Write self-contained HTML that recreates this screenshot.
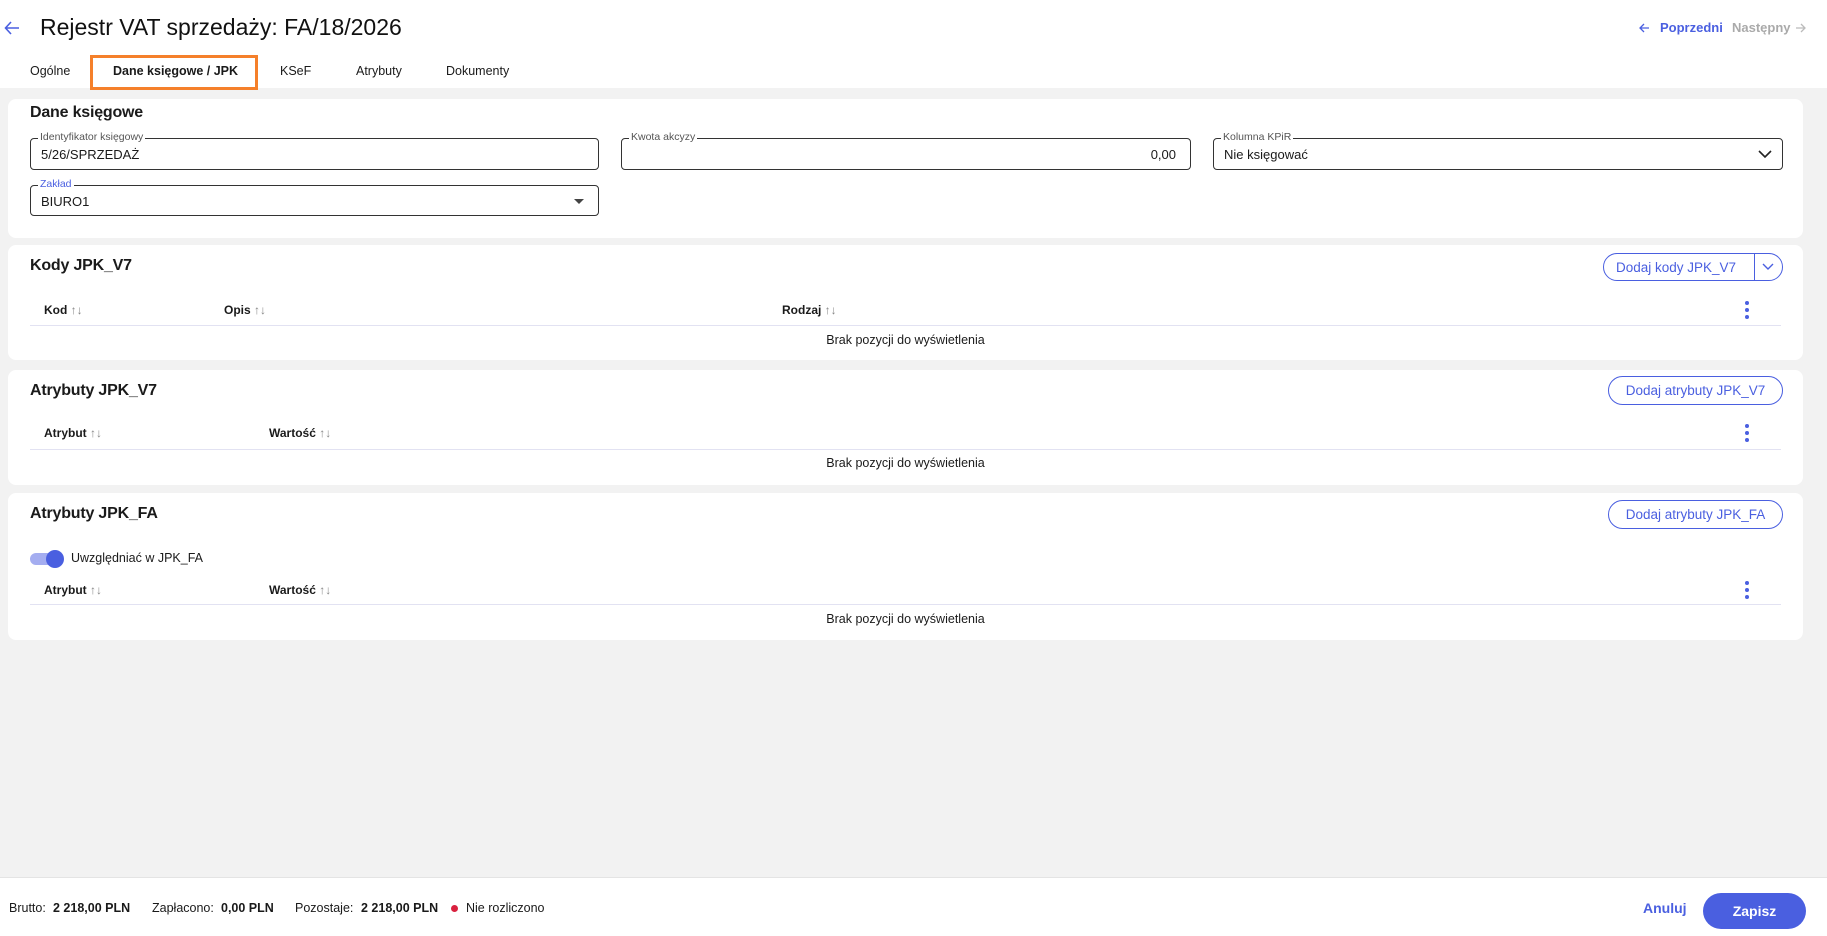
<!DOCTYPE html>
<html><head><meta charset="utf-8"><style>
*{box-sizing:border-box;margin:0;padding:0}
body{width:1827px;height:936px;background:#f2f2f2;font-family:"Liberation Sans",sans-serif;color:#1a1a1a;position:relative;overflow:hidden;font-size:13px}
.abs{position:absolute}
.top{position:absolute;left:0;top:0;width:1827px;height:88px;background:#fff}
.tabbar{position:absolute;left:0;top:55px;width:530px;height:33px;background:#fff}
.card{position:absolute;left:8px;width:1795px;background:#fff;border-radius:8px}
.h{position:absolute;left:22px;font-size:16px;font-weight:bold;letter-spacing:-0.2px}
.fld{position:absolute;border:1px solid #333;border-radius:4px;height:32px}
.fld .lab{position:absolute;top:-8px;left:7px;background:#fff;padding:0 2px;font-size:10.5px;color:#555;line-height:13px}
.fld .val{position:absolute;top:8px;left:10px;font-size:13px}
.btn{position:absolute;border:1px solid #4a5fe0;color:#4a5fe0;border-radius:16px;font-size:13.5px;display:flex;align-items:center;justify-content:center}
.th{position:absolute;font-size:12px;font-weight:bold}
.th span{color:#888;font-weight:normal}
.line{position:absolute;left:22px;width:1751px;height:1px;background:#e2e2f2}
.empty{position:absolute;left:0;width:1795px;text-align:center;font-size:12.5px}
.dots{position:absolute;width:4px}
.dots i{display:block;width:4px;height:4px;border-radius:2px;background:#4a5fe0;margin-bottom:3px}
</style></head><body>
<div class="top"></div>
<svg class="abs" style="left:3px;top:19px" width="18" height="18" viewBox="0 0 18 18"><path d="M16 9H3M8 3L2.5 9 8 15" stroke="#4a5fe0" stroke-width="1.6" fill="none"/></svg>
<div class="abs" style="left:40px;top:14px;font-size:23px;color:#111">Rejestr VAT sprzedaży: FA/18/2026</div>
<svg class="abs" style="left:1638px;top:22px" width="12" height="12" viewBox="0 0 12 12"><path d="M11 6H2M6 2L2 6 6 10" stroke="#4a5fe0" stroke-width="1.3" fill="none"/></svg>
<div class="abs" style="left:1660px;top:20px;font-size:13px;color:#4a5fe0;font-weight:bold">Poprzedni</div>
<div class="abs" style="left:1732px;top:20px;font-size:13px;color:#aaa;font-weight:bold">Następny</div>
<svg class="abs" style="left:1795px;top:22px" width="12" height="12" viewBox="0 0 12 12"><path d="M1 6H10M6 2L10 6 6 10" stroke="#bbb" stroke-width="1.3" fill="none"/></svg>
<div class="tabbar"></div>
<div class="abs" style="left:30px;top:64px;font-size:12.5px">Ogólne</div>
<div class="abs" style="left:90px;top:55px;width:168px;height:35px;border:3px solid #f5802a"></div>
<div class="abs" style="left:113px;top:64px;font-size:12.5px;font-weight:bold">Dane księgowe / JPK</div>
<div class="abs" style="left:280px;top:64px;font-size:12.5px">KSeF</div>
<div class="abs" style="left:356px;top:64px;font-size:12.5px">Atrybuty</div>
<div class="abs" style="left:446px;top:64px;font-size:12.5px">Dokumenty</div>

<div class="card" style="top:99px;height:139px">
<div class="h" style="top:5px">Dane księgowe</div>
<div class="fld" style="left:22px;top:39px;width:569px"><div class="lab">Identyfikator księgowy</div><div class="val">5/26/SPRZEDAŻ</div></div>
<div class="fld" style="left:613px;top:39px;width:570px"><div class="lab">Kwota akcyzy</div><div class="val" style="left:auto;right:14px">0,00</div></div>
<div class="fld" style="left:1205px;top:39px;width:570px"><div class="lab">Kolumna KPiR</div><div class="val">Nie księgować</div>
<svg class="abs" style="right:10px;top:10px" width="14" height="10" viewBox="0 0 14 10"><path d="M1 2l6 6 6-6" stroke="#222" stroke-width="1.6" fill="none"/></svg></div>
<div class="fld" style="left:22px;top:86px;width:569px;height:31px"><div class="lab" style="color:#4a5fe0">Zakład</div><div class="val">BIURO1</div>
<div class="abs" style="right:14px;top:13px;width:0;height:0;border-left:5px solid transparent;border-right:5px solid transparent;border-top:5px solid #444"></div></div>
</div>

<div class="card" style="top:245px;height:115px">
<div class="h" style="top:12px">Kody JPK_V7</div>
<div class="btn" style="left:1595px;top:8px;width:180px;height:28px;justify-content:flex-start;padding-left:12px">Dodaj kody JPK_V7<div class="abs" style="left:150px;top:0;width:1px;height:26px;background:#4a5fe0"></div>
<svg class="abs" style="left:158px;top:9px" width="12" height="8" viewBox="0 0 12 8"><path d="M1 1l5 5 5-5" stroke="#4a5fe0" stroke-width="1.4" fill="none"/></svg></div>
<div class="th" style="left:36px;top:58px">Kod <span>↑↓</span></div>
<div class="th" style="left:216px;top:58px">Opis <span>↑↓</span></div>
<div class="th" style="left:774px;top:58px">Rodzaj <span>↑↓</span></div>
<div class="dots" style="left:1737px;top:56px"><i></i><i></i><i></i></div>
<div class="line" style="top:80px"></div>
<div class="empty" style="top:88px">Brak pozycji do wyświetlenia</div>
</div>

<div class="card" style="top:370px;height:115px">
<div class="h" style="top:12px">Atrybuty JPK_V7</div>
<div class="btn" style="left:1600px;top:6px;width:175px;height:29px">Dodaj atrybuty JPK_V7</div>
<div class="th" style="left:36px;top:56px">Atrybut <span>↑↓</span></div>
<div class="th" style="left:261px;top:56px">Wartość <span>↑↓</span></div>
<div class="dots" style="left:1737px;top:54px"><i></i><i></i><i></i></div>
<div class="line" style="top:79px"></div>
<div class="empty" style="top:86px">Brak pozycji do wyświetlenia</div>
</div>

<div class="card" style="top:493px;height:147px">
<div class="h" style="top:12px">Atrybuty JPK_FA</div>
<div class="btn" style="left:1600px;top:7px;width:175px;height:29px">Dodaj atrybuty JPK_FA</div>
<div class="abs" style="left:22px;top:60px;width:32px;height:12px;border-radius:6px;background:#a4adf0"></div>
<div class="abs" style="left:38px;top:57px;width:18px;height:18px;border-radius:9px;background:#4a5fe0"></div>
<div class="abs" style="left:63px;top:58px;font-size:12.5px">Uwzględniać w JPK_FA</div>
<div class="th" style="left:36px;top:90px">Atrybut <span>↑↓</span></div>
<div class="th" style="left:261px;top:90px">Wartość <span>↑↓</span></div>
<div class="dots" style="left:1737px;top:88px"><i></i><i></i><i></i></div>
<div class="line" style="top:111px"></div>
<div class="empty" style="top:119px">Brak pozycji do wyświetlenia</div>
</div>

<div class="abs" style="left:0;top:877px;width:1827px;height:59px;background:#fff;border-top:1px solid #e4e4e4"></div>
<div class="abs" style="left:9px;top:901px;font-size:12.5px">Brutto:</div>
<div class="abs" style="left:53px;top:901px;font-size:12.5px;font-weight:bold">2 218,00 PLN</div>
<div class="abs" style="left:152px;top:901px;font-size:12.5px">Zapłacono:</div>
<div class="abs" style="left:221px;top:901px;font-size:12.5px;font-weight:bold">0,00 PLN</div>
<div class="abs" style="left:295px;top:901px;font-size:12.5px">Pozostaje:</div>
<div class="abs" style="left:361px;top:901px;font-size:12.5px;font-weight:bold">2 218,00 PLN</div>
<div class="abs" style="left:451px;top:905px;width:7px;height:7px;border-radius:4px;background:#d9213f"></div>
<div class="abs" style="left:466px;top:901px;font-size:12.5px">Nie rozliczono</div>
<div class="abs" style="left:1643px;top:900px;font-size:14px;color:#4a5fe0;font-weight:bold">Anuluj</div>
<div class="abs" style="left:1703px;top:893px;width:103px;height:36px;border-radius:18px;background:#4a5fe0;color:#fff;font-size:14px;font-weight:bold;display:flex;align-items:center;justify-content:center">Zapisz</div>
</body></html>
